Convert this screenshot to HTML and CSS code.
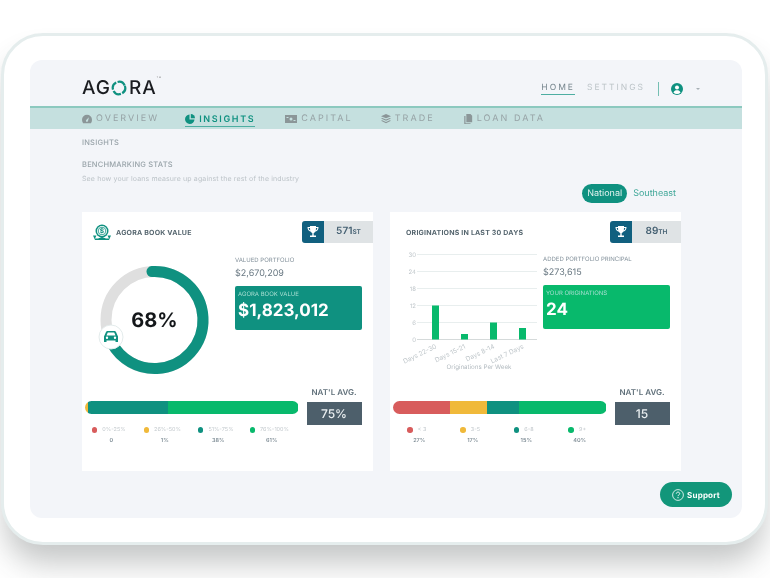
FILE: index.html
```html
<!DOCTYPE html>
<html lang="en">

<head>
    <meta charset="UTF-8">
    <meta name="viewport" content="width=device-width, initial-scale=1.0">
    <title>Agora - Insights</title>
    <link rel="stylesheet" href="styles.css">
</head>

<body>
    <div class="tablet">
        <div class="screen">
            <!-- top bar -->
            <header class="topbar">
                <div class="logo">AG<svg class="logo_o" viewBox="0 0 16 16" role="img" aria-label="O"><circle cx="8" cy="8" r="6.2" fill="none" stroke="#0f9180" stroke-width="2.2" stroke-dasharray="8.2 1.55" transform="rotate(-20 8 8)"/></svg>RA<sup>TM</sup></div>
                <div class="topnav">
                    <a class="topnav_link active">HOME</a>
                    <a class="topnav_link">SETTINGS</a>
                    <span class="topnav_line"></span>
                    <svg class="user" viewBox="0 0 12 12"><circle cx="6" cy="6" r="6" fill="#0f9180"/><circle cx="6" cy="4.6" r="2" fill="#fff"/><path d="M2.4 9.4c.7-1.6 2-2.2 3.6-2.2s2.9.6 3.6 2.2a5 5 0 0 1-7.2 0z" fill="#fff"/></svg>
                    <span class="caret"></span>
                </div>
            </header>

            <!-- tabs -->
            <nav class="tabs">
                <a class="tab"><svg viewBox="0 0 12 10"><path d="M6 0a6 6 0 0 0-6 6c0 1.500.5 2.900 1.300 4h9.400A6.700 6.700 0 0 0 12 6a6 6 0 0 0-6-6zm0 8.500a1.300 1.300 0 0 1-.9-2.200L8.300 3 7.200 7.500A1.300 1.300 0 0 1 6 8.500z" fill="#8b9698"/></svg>OVERVIEW</a>
                <a class="tab active"><svg viewBox="0 0 12 12"><path d="M5.400.6v6h6A5.700 5.700 0 1 1 5.400.6z" fill="#0f9180"/><path d="M7 0a5 5 0 0 1 5 5H7z" fill="#0f9180"/></svg>INSIGHTS</a>
                <a class="tab"><svg class="wide" viewBox="0 0 12 8"><path d="M0 0h12v8H0z" fill="#8b9698"/><circle cx="6" cy="4" r="1.500" fill="#c5e0df"/><path d="M1.500 2h2v1h-2zM8.500 5h2v1h-2z" fill="#c5e0df"/></svg>CAPITAL</a>
                <a class="tab"><svg viewBox="0 0 12 12"><path d="M6 0l6 2.600-6 2.600L0 2.600z" fill="#8b9698"/><path d="M1.500 4.700L6 6.700l4.500-2 1.500.7-6 2.600-6-2.600zM1.500 7.500L6 9.500l4.500-2 1.500.7L6 11l-6-2.800z" fill="#8b9698"/></svg>TRADE</a>
                <a class="tab"><svg viewBox="0 0 12 12"><path d="M4 0h5l2 2v8H4z" fill="#8b9698"/><path d="M1.500 2.500H3V11h6v1H1.500z" fill="#8b9698"/></svg>LOAN DATA</a>
            </nav>

            <div class="content">
                <div class="crumb">INSIGHTS</div>
                <div class="heading">BENCHMARKING STATS</div>
                <div class="sub">See how your loans measure up against the rest of the industry</div>

                <div class="toggle">
                    <span class="pill">National</span>
                    <span class="pill_off">Southeast</span>
                </div>

                <div class="cards">
                    <!-- book value -->
                    <section class="card">
                        <div class="card_head">
                            <div class="card_title first">
                                <svg class="seal" viewBox="0 0 18 16"><path d="M0 11.500h3.500l-1.500 3H5L9 13l4 1.500h3l-1.500-3H18L16 16H2z" fill="#0f9180"/><circle cx="9" cy="7" r="6.500" fill="#0f9180"/><circle cx="9" cy="7" r="5" fill="#fff"/><circle cx="9" cy="7" r="3.800" fill="none" stroke="#0f9180" stroke-width=".8"/><text x="9" y="9.300" class="seal_txt">$</text></svg>
                                AGORA BOOK VALUE
                            </div>
                            <div class="rank">
                                <span class="rank_icon"><svg viewBox="0 0 12 12"><path d="M3 0h6v1h2.500c0 2.700-1 4-3 4.500C8 6.300 7.300 6.800 6.700 7v2.500H9V11H3V9.500h2.300V7c-.6-.2-1.300-.7-1.800-1.500C1.500 5 .5 3.700.5 1H3zM1.700 2c.1 1.300.6 2 1.500 2.400L3 2zM10.300 2H9l-.2 2.400c.9-.4 1.400-1.100 1.500-2.400z" fill="#fff"/></svg></span>
                                <span class="rank_num">571<small>ST</small></span>
                            </div>
                        </div>
                        <div class="card_body">
                            <div class="visual">
                                <svg class="donut" viewBox="0 0 153 143">
                                    <circle cx="72.500" cy="77" r="48.500" fill="none" stroke="#dfdfdf" stroke-width="11"/>
                                    <circle cx="72.500" cy="77" r="48.500" fill="none" stroke="#0f9180" stroke-width="11" stroke-linecap="round" stroke-dasharray="207 305" transform="rotate(-93 72.500 77)"/>
                                    <text x="72.500" y="84" class="donut_txt">68%</text>
                                    <circle cx="29" cy="94" r="12" fill="#fff" stroke="#e4ecec"/>
                                    <path d="M22 99v-5.500l2-4.500c.3-.7.800-1 1.500-1h7c.7 0 1.200.3 1.500 1l2 4.500V99h-2.500v-1.500h-9V99zM24.500 92.500h9l-1.300-3h-6.400zM25 96a1.200 1.200 0 1 0 0-2.400 1.200 1.200 0 0 0 0 2.400zM33 96a1.200 1.200 0 1 0 0-2.400 1.200 1.200 0 0 0 0 2.400z" fill="#0f9180" fill-rule="evenodd"/>
                                </svg>
                            </div>
                            <div class="stats">
                                <div class="stat_label">VALUED PORTFOLIO</div>
                                <div class="stat_value">$2,670,209</div>
                                <div class="box teal">
                                    <div class="box_label">AGORA BOOK VALUE</div>
                                    <div class="box_value">$1,823,012</div>
                                </div>
                            </div>
                        </div>
                        <div class="card_foot">
                            <div class="dist">
                                <div class="bar">
                                    <span class="seg yellow" style="width: 1.500%"></span>
                                    <span class="seg teal" style="width: 37.500%"></span>
                                    <span class="seg green" style="width: 61%"></span>
                                </div>
                                <div class="legend">
                                    <div class="legend_item"><div class="legend_key"><i class="dot red"></i>0%-25%</div><b>0</b></div>
                                    <div class="legend_item"><div class="legend_key"><i class="dot yellow"></i>26%-50%</div><b>1%</b></div>
                                    <div class="legend_item"><div class="legend_key"><i class="dot teal"></i>51%-75%</div><b>38%</b></div>
                                    <div class="legend_item"><div class="legend_key"><i class="dot green"></i>76%-100%</div><b>61%</b></div>
                                </div>
                            </div>
                            <div class="avg">
                                <div class="avg_label">NAT'L AVG.</div>
                                <div class="avg_box">75%</div>
                            </div>
                        </div>
                    </section>

                    <!-- originations -->
                    <section class="card">
                        <div class="card_head">
                            <div class="card_title second">ORIGINATIONS IN LAST 30 DAYS</div>
                            <div class="rank">
                                <span class="rank_icon"><svg viewBox="0 0 12 12"><path d="M3 0h6v1h2.500c0 2.700-1 4-3 4.500C8 6.300 7.300 6.800 6.700 7v2.500H9V11H3V9.500h2.300V7c-.6-.2-1.300-.7-1.800-1.500C1.500 5 .5 3.700.5 1H3zM1.700 2c.1 1.300.6 2 1.500 2.400L3 2zM10.300 2H9l-.2 2.400c.9-.4 1.400-1.100 1.500-2.400z" fill="#fff"/></svg></span>
                                <span class="rank_num">89<small>TH</small></span>
                            </div>
                        </div>
                        <div class="card_body">
                            <div class="visual">
                                <svg class="chart" viewBox="0 0 153 143">
                                    <g class="grid">
                                        <path d="M27 11.500h120M27 28.500h120M27 45.500h120M27 62.500h120M27 79.500h120"/>
                                        <path class="axis" d="M27 96.500h120"/>
                                    </g>
                                    <g class="ticks">
                                        <text x="26" y="14">30</text>
                                        <text x="26" y="31">24</text>
                                        <text x="26" y="48">18</text>
                                        <text x="26" y="65">12</text>
                                        <text x="26" y="82">6</text>
                                        <text x="26" y="99">0</text>
                                    </g>
                                    <g fill="#08b96c">
                                        <rect x="42" y="62.500" width="7" height="34"/>
                                        <rect x="71" y="91" width="7" height="5.500"/>
                                        <rect x="100" y="79.500" width="7" height="17"/>
                                        <rect x="129" y="85" width="7" height="11.500"/>
                                    </g>
                                    <g class="cats">
                                        <text transform="translate(47 105) rotate(-26)">Days 22-30</text>
                                        <text transform="translate(76 105) rotate(-26)">Days 15-21</text>
                                        <text transform="translate(105 105) rotate(-26)">Days 8-14</text>
                                        <text transform="translate(134 105) rotate(-26)">Last 7 Days</text>
                                    </g>
                                    <text class="cats_title" x="89" y="126">Originations Per Week</text>
                                </svg>
                            </div>
                            <div class="stats tight">
                                <div class="stat_label">ADDED PORTFOLIO PRINCIPAL</div>
                                <div class="stat_value">$273,615</div>
                                <div class="box green">
                                    <div class="box_label">YOUR ORIGINATIONS</div>
                                    <div class="box_value">24</div>
                                </div>
                            </div>
                        </div>
                        <div class="card_foot">
                            <div class="dist">
                                <div class="bar">
                                    <span class="seg red" style="width: 27%"></span>
                                    <span class="seg yellow" style="width: 17%"></span>
                                    <span class="seg teal" style="width: 15%"></span>
                                    <span class="seg green" style="width: 41%"></span>
                                </div>
                                <div class="legend">
                                    <div class="legend_item"><div class="legend_key"><i class="dot red"></i>&lt; 3</div><b>27%</b></div>
                                    <div class="legend_item"><div class="legend_key"><i class="dot yellow"></i>3-5</div><b>17%</b></div>
                                    <div class="legend_item"><div class="legend_key"><i class="dot teal"></i>6-8</div><b>15%</b></div>
                                    <div class="legend_item"><div class="legend_key"><i class="dot green"></i>9+</div><b>40%</b></div>
                                </div>
                            </div>
                            <div class="avg">
                                <div class="avg_label">NAT'L AVG.</div>
                                <div class="avg_box">15</div>
                            </div>
                        </div>
                    </section>
                </div>

                <div class="support_row">
                    <a class="support"><svg viewBox="0 0 12 12"><circle cx="6" cy="6" r="5.400" fill="none" stroke="#fff" stroke-width=".8"/><path d="M4.300 4.700c0-1 .8-1.600 1.700-1.600s1.700.6 1.700 1.500c0 1.300-1.700 1.300-1.700 2.500" fill="none" stroke="#fff" stroke-width=".9"/><circle cx="6" cy="8.700" r=".6" fill="#fff"/></svg>Support</a>
                </div>
            </div>
        </div>
    </div>
</body>

</html>
```

FILE: styles.css
```css
* {
    box-sizing: border-box;
}

html,
body {
    height: 578px;
    overflow: hidden;
}

body {
    margin: 0;
    background: #fff;
    font-family: Inter, "Open Sans", sans-serif;
    color: #5a6b76;
    text-rendering: geometricPrecision;
}

/* tablet frame */
.tablet {
    width: 767px;
    height: 512px;
    margin: 33px 0 0 1px;
    padding: 24px 23px 24px 26px;
    background: #fff;
    border: 3px solid #e5eded;
    border-radius: 42px;
    box-shadow: 0 22px 30px -4px rgba(60, 65, 65, .3);
}

/* the shot is a soft mockup, so the screen is blurred a little */
.screen {
    height: 458px;
    background: #f3f5f9;
    border-radius: 12px;
    overflow: hidden;
    filter: blur(.35px);
}

/* top bar */
.topbar {
    height: 46px;
    padding: 0 42px 0 52px;
    display: flex;
    justify-content: space-between;
    align-items: center;
}

.logo {
    display: flex;
    align-items: center;
    font-size: 19px;
    font-weight: 500;
    letter-spacing: 1px;
    color: #1a1c20;
    padding-top: 9px;
}

.logo_o {
    width: 16px;
    height: 16px;
    margin: 0 1.500px 0 .5px;
}

.logo sup {
    font-size: 2px;
    align-self: flex-start;
    margin-top: 1px;
    color: #777;
}

.topnav {
    display: flex;
    align-items: center;
    padding-top: 11px;
}

.topnav_link {
    font-size: 8.500px;
    letter-spacing: 2px;
    color: #bcc4c8;
    padding-bottom: 1px;
    margin-right: 12px;
    border-bottom: 1px solid transparent;
}

.topnav_link.active {
    color: #76868e;
    border-bottom-color: #4eaea2;
}

.topnav_line {
    width: 1px;
    height: 14px;
    background: #75bfb3;
    margin: 0 12px 0 1px;
}

.user {
    width: 12px;
    height: 12px;
}

.caret {
    border: 2.500px solid transparent;
    border-top-color: #a7b0b5;
    margin: 3px 0 0 13px;
}

/* tabs */
.tabs {
    height: 23px;
    background: #c5e0df;
    border-top: 2px solid #8cc9bf;
    padding-left: 52px;
    display: flex;
    align-items: center;
    gap: 28px;
}

.tab {
    display: flex;
    align-items: center;
    gap: 4px;
    font-size: 9px;
    letter-spacing: 2.050px;
    color: #97a3a6;
}

.tab:first-child {
    margin-right: -2px;
}

.tab svg {
    width: 10px;
    height: 10px;
}

.tab svg.wide {
    width: 12px;
}

.tab.active {
    color: #0f9180;
    font-weight: 600;
    letter-spacing: 1.650px;
    border-bottom: 1px solid #4eaea2;
    padding-bottom: 1px;
    margin-bottom: -3px;
    margin-right: 2px;
}

/* page content */
.content {
    padding: 9px 10px 0 52px;
}

.crumb,
.heading {
    font-size: 7.500px;
    font-weight: 500;
    line-height: 10px;
    letter-spacing: .2px;
    color: #98a3a9;
}

.heading {
    margin-top: 12px;
}

.sub {
    margin-top: 4px;
    font-size: 7px;
    line-height: 10px;
    letter-spacing: .13px;
    color: #bcc3c8;
}

.toggle {
    display: flex;
    justify-content: flex-end;
    align-items: center;
    gap: 6px;
    height: 19px;
    margin: 0 56px 0 0;
    font-size: 9px;
}

.pill {
    height: 19px;
    padding: 0 5px;
    line-height: 19px;
    color: #e2f3ef;
    background: #0f9180;
    border-radius: 10px;
}

.pill_off {
    color: #3fa798;
}

/* cards */
.cards {
    display: flex;
    gap: 17px;
    margin-top: 9px;
}

.card {
    width: 291px;
    height: 259px;
    background: #fff;
}

.card_head {
    height: 31px;
    padding-top: 9px;
    display: flex;
    justify-content: space-between;
}

.card_title {
    display: flex;
    align-items: center;
    font-size: 7px;
    font-weight: 700;
    letter-spacing: .2px;
    color: #56666f;
}

.card_title.first {
    padding-left: 11px;
    gap: 5px;
}

.card_title.second {
    padding-left: 16px;
}

.seal {
    width: 18px;
    height: 16px;
}

.seal_txt {
    font-size: 6.500px;
    font-weight: 700;
    fill: #0f9180;
    text-anchor: middle;
}

.rank {
    width: 71px;
    height: 22px;
    display: flex;
    background: #dfe3e5;
    border-radius: 3px 0 0 3px;
    overflow: hidden;
}

.rank_icon {
    width: 22px;
    background: #11607f;
    display: flex;
    align-items: center;
    justify-content: center;
}

.rank_icon svg {
    width: 12px;
    height: 12px;
}

.rank_num {
    flex: 1;
    text-align: center;
    line-height: 21px;
    font-size: 10px;
    font-weight: 600;
    color: #466173;
}

.rank_num small {
    font-size: 6.500px;
}

.card_body {
    height: 143px;
    display: flex;
}

.visual {
    width: 153px;
    flex: none;
}

.donut,
.chart {
    display: block;
    width: 153px;
    height: 143px;
}

.donut_txt {
    font-size: 20px;
    font-weight: 700;
    fill: #14171a;
    text-anchor: middle;
}

.grid path {
    stroke: #e8eeee;
    fill: none;
}

.grid .axis {
    stroke: #d5dada;
}

.ticks text {
    font-size: 6px;
    fill: #bfc6ca;
    text-anchor: end;
}

.cats text {
    font-size: 6.500px;
    fill: #bfc6ca;
    text-anchor: end;
}

.cats_title {
    font-size: 6.200px;
    fill: #b3bbc0;
    text-anchor: middle;
}

.stats {
    width: 127px;
    padding-top: 14px;
}

.stats.tight {
    padding-top: 13px;
}

.stat_label {
    font-size: 6px;
    line-height: 8px;
    color: #82909a;
}

.stat_value {
    margin-top: 3px;
    font-size: 9px;
    line-height: 12px;
    color: #6b7a84;
}

.box {
    height: 44px;
    margin-top: 6px;
    padding: 5px 3px;
    border-radius: 2px;
    color: #fff;
}

.box.teal {
    background: #0f9180;
}

.box.green {
    background: #08b96c;
}

.box_label {
    font-size: 6px;
    line-height: 8px;
    color: #a9dfd2;
}

.box_value {
    margin-top: 1px;
    font-size: 17px;
    line-height: 22px;
    font-weight: 700;
}

/* bottom bar + nat'l average */
.card_foot {
    display: flex;
    gap: 8px;
    padding-left: 2.500px;
}

.dist {
    width: 214px;
    padding-top: 15px;
}

.bar {
    height: 13px;
    display: flex;
    border-radius: 7px;
    overflow: hidden;
}

.seg {
    display: block;
}

.red {
    background: #d85c5c;
}

.yellow {
    background: #f0b93a;
}

.teal {
    background: #0f9180;
}

.green {
    background: #08b96c;
}

.legend {
    display: flex;
    margin-top: 12px;
}

.legend_item {
    width: 53.500px;
    text-align: center;
    font-size: 5.500px;
    color: #c3c9cd;
}

.legend_key {
    display: flex;
    justify-content: center;
    align-items: center;
    gap: 5px;
    height: 8px;
    padding-right: 5px;
}

.legend_item b {
    display: block;
    margin-top: 4px;
    font-weight: 600;
    color: #7f8d96;
}

.dot {
    width: 5.500px;
    height: 5.500px;
    border-radius: 50%;
}

.avg {
    width: 55px;
}

.avg_label {
    text-align: center;
    font-size: 8px;
    line-height: 12px;
    font-weight: 600;
    color: #5f6f79;
}

.avg_box {
    height: 23px;
    margin-top: 4px;
    line-height: 23px;
    text-align: center;
    font-size: 12px;
    font-weight: 500;
    color: #e9eef0;
    background: #4d5f6b;
}

/* support button */
.support_row {
    display: flex;
    justify-content: flex-end;
    margin-top: 11px;
}

.support {
    width: 72px;
    height: 25px;
    display: flex;
    align-items: center;
    justify-content: center;
    gap: 3px;
    font-size: 8px;
    font-weight: 700;
    letter-spacing: .2px;
    color: #fff;
    background: #12967a;
    border-radius: 13px;
}

.support svg {
    width: 12px;
    height: 12px;
}
```
